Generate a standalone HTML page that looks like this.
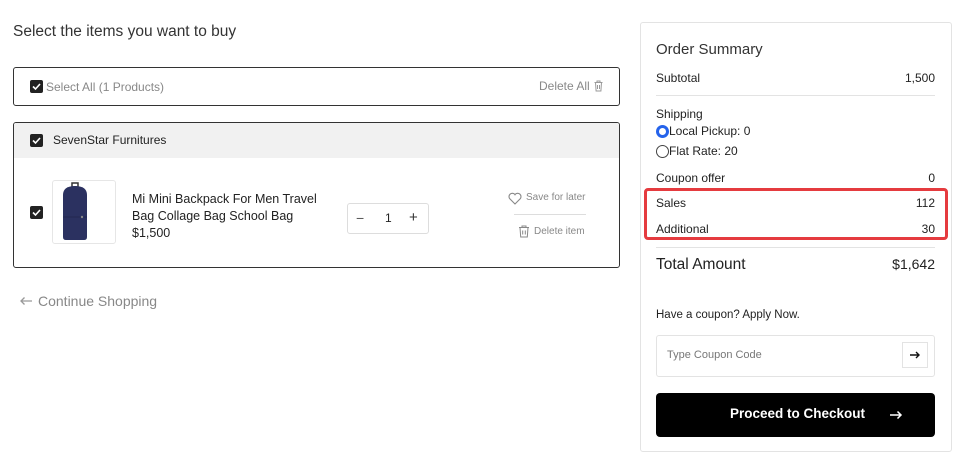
<!DOCTYPE html>
<html><head><meta charset="utf-8"><style>
*{margin:0;padding:0;box-sizing:border-box}
body{width:959px;height:442px;overflow:hidden;background:#fff;font-family:"Liberation Sans",sans-serif;color:#222;position:relative}
.a{position:absolute;white-space:nowrap}
.cb{position:absolute;width:13px;height:13px;background:#222;border-radius:2px}
.cb svg{display:block}
.t13{font-size:12px}
</style></head><body>
<div class="a" style="left:13px;top:23px;font-size:15.5px;color:#333">Select the items you want to buy</div>

<div class="a" style="left:13px;top:67px;width:607px;height:39px;border:1px solid #333;border-radius:3px"></div>
<div class="cb" style="left:30px;top:80px"><svg width="13" height="13"><path d="M3 6.5l2.5 2.5 4.5-5" stroke="#fff" stroke-width="1.6" fill="none"/></svg></div>
<div class="a t13" style="left:46px;top:80px;color:#888">Select All (1 Products)</div>
<div class="a t13" style="left:539px;top:79px;color:#888">Delete All</div>
<svg class="a" style="left:593px;top:80px" width="11" height="12"><path d="M1.5 2.5h8M4 2.5V1h3v1.5M2.5 2.5l.6 8.5h4.8l.6-8.5M4.5 5v4M6.5 5v4" stroke="#999" fill="none"/></svg>

<div class="a" style="left:13px;top:122px;width:607px;height:146px;border:1px solid #333;border-radius:3px;overflow:hidden"><div style="height:35px;background:#f1f1f1"></div></div>
<div class="cb" style="left:30px;top:134px"><svg width="13" height="13"><path d="M3 6.5l2.5 2.5 4.5-5" stroke="#fff" stroke-width="1.6" fill="none"/></svg></div>
<div class="a t13" style="left:53px;top:133px;color:#222">SevenStar Furnitures</div>

<div class="cb" style="left:30px;top:206px"><svg width="13" height="13"><path d="M3 6.5l2.5 2.5 4.5-5" stroke="#fff" stroke-width="1.6" fill="none"/></svg></div>
<div class="a" style="left:52px;top:180px;width:64px;height:64px;border:1px solid #e6e6e6;border-radius:3px"></div>
<svg class="a" style="left:52px;top:180px" width="64" height="64"><path d="M20 3h6v4h-6z" fill="none" stroke="#333" stroke-width="1.5"/><path d="M11 15q0-9 12-9t12 9v42q0 3-3 3h-18q-3 0-3-3z" fill="#2b3160"/><path d="M11 37h24" stroke="#232850"/><circle cx="30" cy="37" r="1.2" fill="#888"/></svg>
<div class="a" style="left:132px;top:191px;font-size:12.5px;line-height:17px;color:#222">Mi Mini Backpack For Men Travel<br>Bag Collage Bag School Bag<br>$1,500</div>

<div class="a" style="left:347px;top:203px;width:82px;height:31px;border:1px solid #ddd;border-radius:3px"></div>
<div class="a" style="left:356px;top:210px;font-size:14px;color:#555">−</div>
<div class="a t13" style="left:385px;top:211px">1</div>
<div class="a" style="left:409px;top:209px;font-size:15px;color:#333">+</div>

<svg class="a" style="left:508px;top:192px" width="14" height="13"><path d="M7 12L1.8 6.8A3 3 0 016.9 2.5L7 2.7 7.1 2.5a3 3 0 015.1 4.3z" fill="none" stroke="#888" stroke-width="1.1"/></svg>
<div class="a" style="left:526px;top:192px;font-size:10px;color:#888">Save for later</div>
<div class="a" style="left:514px;top:214px;width:72px;height:1px;background:#ddd"></div>
<svg class="a" style="left:518px;top:225px" width="12" height="13"><path d="M1 2.5h10M4 2.5V1h4v1.5M2 2.5l.7 9.5h6.6L10 2.5M4.7 5.5v4M7.3 5.5v4" stroke="#888" fill="none"/></svg>
<div class="a" style="left:534px;top:226px;font-size:10px;color:#888">Delete item</div>

<svg class="a" style="left:19px;top:296px" width="14" height="10"><path d="M13 5H2M5.5 1.5L2 5l3.5 3.5" stroke="#999" stroke-width="1.3" fill="none"/></svg>
<div class="a" style="left:38px;top:293px;font-size:14px;color:#888">Continue Shopping</div>

<div class="a" style="left:640px;top:22px;width:312px;height:430px;border:1px solid #e3e3e3;border-radius:3px"></div>
<div class="a" style="left:656px;top:41px;font-size:15px;color:#333">Order Summary</div>
<div class="a t13" style="left:656px;top:71px">Subtotal</div>
<div class="a t13" style="right:24px;top:71px">1,500</div>
<div class="a" style="left:656px;top:95px;width:279px;height:1px;background:#e3e3e3"></div>
<div class="a t13" style="left:656px;top:107px">Shipping</div>
<div class="a" style="left:656px;top:125px;width:13px;height:13px;border-radius:50%;border:3.5px solid #2563eb;background:#fff"></div>
<div class="a t13" style="left:669px;top:124px">Local Pickup: 0</div>
<div class="a" style="left:656px;top:145px;width:13px;height:13px;border-radius:50%;border:1px solid #444"></div>
<div class="a t13" style="left:669px;top:144px">Flat Rate: 20</div>
<div class="a t13" style="left:656px;top:171px">Coupon offer</div>
<div class="a t13" style="right:24px;top:171px">0</div>
<div class="a" style="left:644px;top:188px;width:304px;height:52px;border:3px solid #e53b3f;border-radius:4px"></div>
<div class="a t13" style="left:656px;top:196px">Sales</div>
<div class="a t13" style="right:24px;top:196px">112</div>
<div class="a t13" style="left:656px;top:222px">Additional</div>
<div class="a t13" style="right:24px;top:222px">30</div>
<div class="a" style="left:656px;top:247px;width:279px;height:1px;background:#e3e3e3"></div>
<div class="a" style="left:656px;top:256px;font-size:15.5px;color:#222">Total Amount</div>
<div class="a" style="right:24px;top:256px;font-size:14px;color:#222">$1,642</div>
<div class="a" style="left:656px;top:309px;font-size:11.5px;color:#222">Have a coupon? Apply Now.</div>
<div class="a" style="left:656px;top:335px;width:279px;height:42px;border:1px solid #e3e3e3;border-radius:3px"></div>
<div class="a" style="left:667px;top:349px;font-size:11px;color:#777">Type Coupon Code</div>
<div class="a" style="left:902px;top:342px;width:26px;height:26px;border:1px solid #e3e3e3"></div>
<svg class="a" style="left:910px;top:351px" width="11" height="8"><path d="M0 4h9M6 1l3 3-3 3" stroke="#111" stroke-width="1.4" fill="none"/></svg>
<div class="a" style="left:656px;top:393px;width:279px;height:44px;background:#000;border-radius:4px"></div>
<div class="a" style="left:730px;top:406px;font-size:13.5px;font-weight:bold;color:#fff">Proceed to Checkout</div>
<svg class="a" style="left:890px;top:410px" width="13" height="10"><path d="M0 5h11M7.5 1.5L11 5 7.5 8.5" stroke="#fff" stroke-width="1.5" fill="none"/></svg>
</body></html>
